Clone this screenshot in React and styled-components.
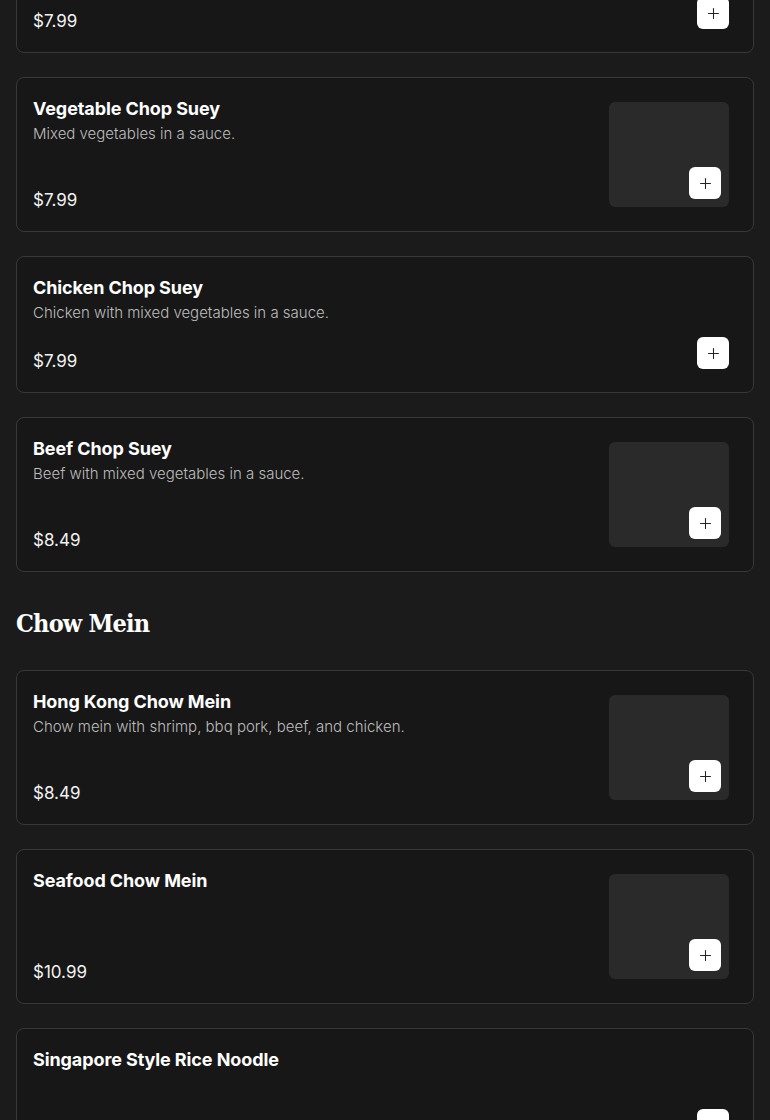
import React from 'react';
import styled, { createGlobalStyle } from 'styled-components';
import { Plus } from 'lucide-react';

const GlobalStyle = createGlobalStyle`
  html, body {
    margin: 0;
    padding: 0;
    background: #1b1b1b;
  }
  body {
    font-family: 'Inter', 'Noto Sans', sans-serif;
    color: #ffffff;
  }
`;

const Page = styled.div`
  padding: 0 16px 40px;
  margin-top: -84px;
`;

const Section = styled.section`
  display: flex;
  flex-direction: column;
  gap: 24px;
`;

const SectionTitle = styled.h2`
  margin: 36px 0 6px;
  font-family: 'DejaVu Serif Condensed', 'DejaVu Serif', serif;
  font-stretch: condensed;
  font-weight: 700;
  font-size: 25px;
  line-height: 32px;
  letter-spacing: -0.8px;
  color: #ffffff;
`;

const Card = styled.div`
  display: flex;
  align-items: stretch;
  gap: 16px;
  padding: 20px 24px 20px 16px;
  background: #171717;
  border: 1px solid #383838;
  border-radius: 8px;
`;

const Info = styled.div`
  flex: 1;
  display: flex;
  flex-direction: column;
  min-width: 0;
`;

const Name = styled.div`
  font-size: 18px;
  font-weight: 700;
  line-height: 22px;
  letter-spacing: -0.1px;
  color: #ffffff;
`;

const Description = styled.div`
  margin-top: 4px;
  min-height: 20px;
  font-size: 15px;
  font-weight: 300;
  line-height: 20px;
  color: #bdbdbd;
`;

const Price = styled.div`
  margin-top: auto;
  padding-top: 27px;
  font-size: 17px;
  line-height: 22px;
  color: #f2f2f2;
`;

const Thumb = styled.div`
  position: relative;
  align-self: center;
  flex-shrink: 0;
  width: 120px;
  height: 105px;
  margin: 4px 0;
  background: #2a2a2a;
  border-radius: 6px;
`;

const AddButton = styled.button`
  display: flex;
  align-items: center;
  justify-content: center;
  width: 32px;
  height: 32px;
  padding: 0;
  border: none;
  border-radius: 6px;
  background: #ffffff;
  color: #222222;
  cursor: pointer;
  flex-shrink: 0;

  ${props => props.overlay ? `
    position: absolute;
    right: 8px;
    bottom: 8px;
  ` : `
    align-self: flex-end;
    margin-bottom: 3px;
  `}
`;

const sections = [
  {
    title: null,
    items: [
      { name: 'Shrimp Chop Suey', desc: 'Shrimp with mixed vegetables in a sauce.', price: '$7.99', image: false },
      { name: 'Vegetable Chop Suey', desc: 'Mixed vegetables in a sauce.', price: '$7.99', image: true },
      { name: 'Chicken Chop Suey', desc: 'Chicken with mixed vegetables in a sauce.', price: '$7.99', image: false },
      { name: 'Beef Chop Suey', desc: 'Beef with mixed vegetables in a sauce.', price: '$8.49', image: true },
    ],
  },
  {
    title: 'Chow Mein',
    items: [
      { name: 'Hong Kong Chow Mein', desc: 'Chow mein with shrimp, bbq pork, beef, and chicken.', price: '$8.49', image: true },
      { name: 'Seafood Chow Mein', desc: '', price: '$10.99', image: true },
      { name: 'Singapore Style Rice Noodle', desc: '', price: '$9.49', image: false },
    ],
  },
];

function MenuItem({ item }) {
  const button = (
    <AddButton overlay={item.image} aria-label={`Add ${item.name}`}>
      <Plus size={17} strokeWidth={1.5} />
    </AddButton>
  );

  return (
    <Card>
      <Info>
        <Name>{item.name}</Name>
        <Description>{item.desc}</Description>
        <Price>{item.price}</Price>
      </Info>
      {item.image ? <Thumb>{button}</Thumb> : button}
    </Card>
  );
}

export default function App() {
  return (
    <>
      <GlobalStyle />
      <Page>
        {sections.map((section, i) => (
          <Section key={i}>
            {section.title && <SectionTitle>{section.title}</SectionTitle>}
            {section.items.map(item => (
              <MenuItem key={item.name} item={item} />
            ))}
          </Section>
        ))}
      </Page>
    </>
  );
}
